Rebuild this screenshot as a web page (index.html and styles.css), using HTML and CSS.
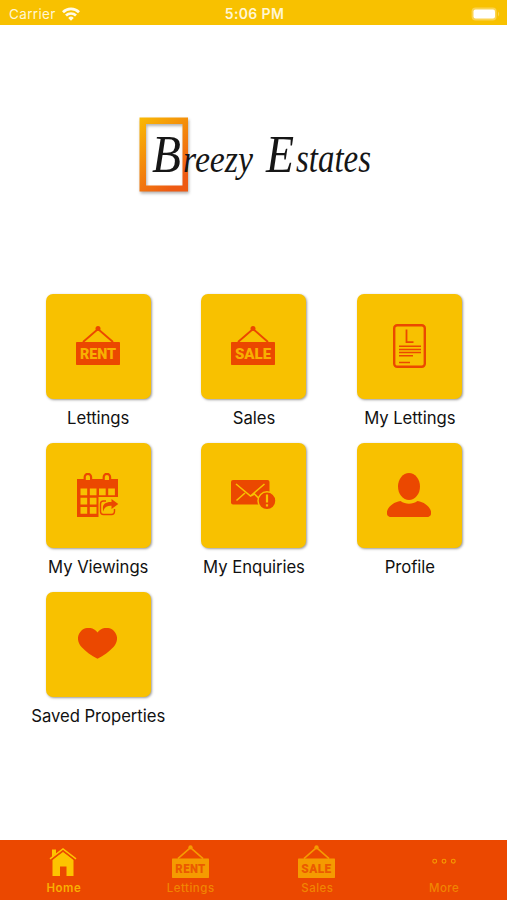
FILE: index.html
```
<!DOCTYPE html>
<html lang="en">
<head>
    <meta charset="utf-8">
    <meta name="viewport" content="width=device-width, initial-scale=1">
    <title>Breezy Estates</title>
    <link rel="stylesheet" href="styles.css">
</head>
<body>
    <svg class="defs" width="0" height="0">
        <symbol id="board" viewBox="0 0 44 39">
            <path d="M7 16 22 3l15 13" fill="none" stroke="currentColor" stroke-width="1.9"/>
            <circle cx="22" cy="2.6" r="2.5" fill="currentColor"/>
            <rect y="16" width="44" height="23" rx="0.7" fill="currentColor"/>
        </symbol>
    </svg>

    <div class="status-bar">
        <div class="carrier">
            <span>Carrier</span>
            <svg width="18" height="14" viewBox="0 0 18 14" fill="none" stroke="#fffbe8" stroke-width="2.7">
                <path d="M1 5.2a11.4 11.4 0 0 1 16 0"/>
                <path d="M4 8.500a7.200 7.200 0 0 1 10 0"/>
                <path d="M6.200 10.900 9 13.700l2.800-2.800a4 4 0 0 0-5.600 0z" fill="#fffbe8" stroke="none"/>
            </svg>
        </div>
        <div class="time">5:06 PM</div>
        <div class="battery">
            <svg width="29" height="14" viewBox="0 0 29 14">
                <rect x="0.6" y="0.6" width="25" height="12.8" rx="4" fill="#fad352"/>
                <rect x="2.5" y="2.6" width="21.5" height="9" rx="2" fill="#fff"/>
                <path d="M27 4.5q2.4 2.5 0 5z" fill="#fad352"/>
            </svg>
        </div>
    </div>

    <div class="logo">
        <svg width="260" height="90" viewBox="0 0 260 90">
            <defs>
                <linearGradient id="frame" x1="0" y1="0" x2="0.6" y2="1">
                    <stop offset="0" stop-color="#f9ba04"/>
                    <stop offset="1" stop-color="#ee5a13"/>
                </linearGradient>
            </defs>
            <path class="frame" d="M3.500 7.500h48.500v74H3.500zM10 14v61.500h36.500V14z" fill="url(#frame)" fill-rule="evenodd"/>
            <g class="script">
                <text x="16" y="62" font-size="53" textLength="29" lengthAdjust="spacingAndGlyphs">B</text>
                <text x="47" y="62" font-size="37" textLength="70" lengthAdjust="spacingAndGlyphs">reezy</text>
                <text x="130" y="62" font-size="53" textLength="28" lengthAdjust="spacingAndGlyphs">E</text>
                <text x="160" y="62" font-size="39" textLength="75" lengthAdjust="spacingAndGlyphs">states</text>
            </g>
        </svg>
    </div>

    <div class="menu">
        <div class="item">
            <div class="tile">
                <svg width="44" height="39" viewBox="0 0 44 39">
                    <use href="#board"/>
                    <text class="board-text" x="4" y="33.200" textLength="36" lengthAdjust="spacingAndGlyphs">RENT</text>
                </svg>
            </div>
            <span>Lettings</span>
        </div>
        <div class="item">
            <div class="tile">
                <svg width="44" height="39" viewBox="0 0 44 39">
                    <use href="#board"/>
                    <text class="board-text" x="4" y="33.200" textLength="36" lengthAdjust="spacingAndGlyphs">SALE</text>
                </svg>
            </div>
            <span>Sales</span>
        </div>
        <div class="item">
            <div class="tile">
                <svg width="33" height="44" viewBox="0 0 33 44" fill="none" stroke="currentColor">
                    <rect x="1.200" y="1.200" width="30.600" height="41.600" rx="3" stroke-width="2.400"/>
                    <path d="M13.500 5.500v12.700h7" stroke-width="1.800"/>
                    <path d="M6 22.200h22M6 25.400h22M6 28.600h22M6 31.800h14M6 38.500h11" stroke-width="1.500"/>
                </svg>
            </div>
            <span>My Lettings</span>
        </div>
        <div class="item">
            <div class="tile">
                <svg width="44" height="44" viewBox="0 0 44 44" fill="currentColor">
                    <path fill-rule="evenodd" d="M1 6h41v18H22.500v20H1z
                        M4.500 15.500h6.700v6.700H4.500z M13.800 15.500h6.700v6.700h-6.700z M23 15.500h6.700v6.700H23z M32.200 15.500h6.700v6.700h-6.700z
                        M4.500 24.800h6.700v6.700H4.500z M13.800 24.800h6.700v6.700h-6.700z M4.500 34h6.700v6.700H4.500z M13.800 34h6.700v6.700h-6.700z"/>
                    <g fill="none">
                        <path d="M8.700 8V4a3.200 3.200 0 0 1 6.400 0v4zM27.700 8V4a3.200 3.200 0 0 1 6.400 0v4z" fill="#f8c100" stroke="currentColor" stroke-width="2.200"/>
                        <path d="M30 28h-2.500a3 3 0 0 0-3 3v7.500a3 3 0 0 0 3 3h8a3 3 0 0 0 3-3V36" stroke="currentColor" stroke-width="1.400"/>
                    </g>
                    <path d="M27.300 38.500c-1.500-6.500 1-9.700 8.200-9.500v-3l6.800 5-6.800 5v-3.200c-4.500-.2-7.200 1.200-8.200 5.700z"/>
                </svg>
            </div>
            <span>My Viewings</span>
        </div>
        <div class="item">
            <div class="tile">
                <svg width="45" height="30" viewBox="0 0 45 30">
                    <rect width="38.500" height="24.500" rx="2" fill="currentColor"/>
                    <path d="M5 4l14.500 12L33.500 4M5.500 20.500l8.500-7.500M19.500 16l4-2 4 4" fill="none" stroke="#f8c100" stroke-width="1.600"/>
                    <circle cx="36" cy="20.800" r="9" fill="currentColor" stroke="#f8c100" stroke-width="1.500"/>
                    <path d="M36 14.500v8M36 24.200v2.400" stroke="#f8c100" stroke-width="2.200"/>
                </svg>
            </div>
            <span>My Enquiries</span>
        </div>
        <div class="item">
            <div class="tile">
                <svg width="44" height="44" viewBox="0 0 44 44" fill="currentColor">
                    <ellipse cx="22" cy="13.500" rx="11" ry="13.500"/>
                    <path d="M13.500 28c5 3.700 12 3.700 17 0 6.500 1.200 11.500 4.700 13.300 9.800 1.100 3.600-.4 6.200-4.300 6.200h-35C.6 44-.9 41.400.2 37.800 2 32.700 7 29.200 13.500 28z"/>
                </svg>
            </div>
            <span>Profile</span>
        </div>
        <div class="item">
            <div class="tile">
                <svg width="39" height="31" viewBox="0 0 39 31">
                    <path d="M19.500 4.500C15.500-1.200 8-1.400 3.500 2.500c-5 4.800-4.400 11.500 0 16.500 4.200 4.800 9.800 8.300 16 11.800 6.200-3.500 11.800-7 16-11.800 4.400-5 5-11.700 0-16.500-4.500-3.900-12-3.700-16 2z" fill="currentColor"/>
                </svg>
            </div>
            <span>Saved Properties</span>
        </div>
    </div>

    <div class="tab-bar">
        <a class="tab active">
            <svg width="28" height="33" viewBox="0 0 28 33">
                <path d="M3 13V4.500h4v4z" fill="currentColor"/>
                <path d="M3.500 15 14 6l10.500 9V31h-7v-9.500h-6.500V31H3.500z" fill="currentColor"/>
                <path d="M1 13.800 14 4l13 9.800" fill="none" stroke="currentColor" stroke-width="1.500"/>
                <path d="M2.500 14.900 14 6.200l11.500 8.700" fill="none" stroke="#eb4800" stroke-width="1.100"/>
            </svg>
            <span>Home</span>
        </a>
        <a class="tab">
            <svg width="37" height="33" viewBox="0 0 44 39">
                <use href="#board"/>
                <text class="board-text" x="4" y="33.200" textLength="36" lengthAdjust="spacingAndGlyphs">RENT</text>
            </svg>
            <span>Lettings</span>
        </a>
        <a class="tab">
            <svg width="37" height="33" viewBox="0 0 44 39">
                <use href="#board"/>
                <text class="board-text" x="4" y="33.200" textLength="36" lengthAdjust="spacingAndGlyphs">SALE</text>
            </svg>
            <span>Sales</span>
        </a>
        <a class="tab">
            <svg width="24" height="33" viewBox="0 0 24 33" fill="none" stroke="currentColor" stroke-width="1.100">
                <circle cx="2.700" cy="16.200" r="1.900"/>
                <circle cx="12" cy="16.200" r="1.900"/>
                <circle cx="21.300" cy="16.200" r="1.900"/>
            </svg>
            <span>More</span>
        </a>
    </div>
</body>
</html>
```

FILE: styles.css
```
* {
    box-sizing: border-box;
}

body {
    margin: 0;
    height: 900px;
    display: flex;
    flex-direction: column;
    font-family: Inter, "Liberation Sans", sans-serif;
    background-color: #fff;
    color: #111;
    overflow: hidden;
}

svg {
    display: block;
}

.defs {
    position: absolute;
}

.status-bar {
    display: grid;
    grid-template-columns: 1fr auto 1fr;
    align-items: center;
    height: 25px;
    padding: 2px 7px 0 9px;
    background-color: #f8c100;
    color: #fff6d5;
    font-size: 13.5px;
}

.carrier {
    display: flex;
    align-items: center;
    gap: 6px;
    letter-spacing: 0.35px;
}

.time {
    font-size: 14px;
    font-weight: 600;
    letter-spacing: 0.35px;
}

.battery {
    justify-self: end;
}

.logo {
    height: 268.6px;
    padding: 85px 0 0 136px;
}

.frame {
    filter: drop-shadow(1.5px 2px 1.5px rgba(0, 0, 0, 0.3));
}

.script {
    font-family: "Liberation Serif", serif;
    font-style: italic;
    fill: #161616;
}

.menu {
    flex: 1;
    display: grid;
    grid-template-columns: repeat(3, 155.8px);
    grid-auto-rows: 149px;
    padding-left: 20.3px;
}

.item {
    display: flex;
    flex-direction: column;
    align-items: center;
    font-size: 16.7px;
    line-height: 20px;
    letter-spacing: -0.05px;
    gap: 9.5px;
}

.tile {
    display: flex;
    align-items: center;
    justify-content: center;
    width: 105px;
    height: 105px;
    padding: 0 1px 1px 0;
    border-radius: 7px;
    background-color: #f8c100;
    color: #eb4800;
    box-shadow: 1px 1px 2.5px rgba(0, 0, 0, 0.4);
}

.board-text {
    font-family: Roboto, sans-serif;
    font-weight: 900;
    font-size: 14.8px;
    fill: #f8b000;
}

.tab-bar {
    display: flex;
    height: 60px;
    padding-top: 5px;
    background-color: #eb4800;
}

.tab {
    flex: 1;
    display: flex;
    flex-direction: column;
    align-items: center;
    gap: 3px;
    color: #f59b00;
    font-size: 11.5px;
    font-weight: 500;
    line-height: 14px;
    letter-spacing: 0.5px;
}

.tab span {
    color: #f18500;
    margin-left: 1px;
}

.tab .board-text {
    fill: #eb5a00;
}

.tab.active {
    color: #fdc400;
    font-weight: 600;
}

.tab.active span {
    color: #f9b000;
}
```
